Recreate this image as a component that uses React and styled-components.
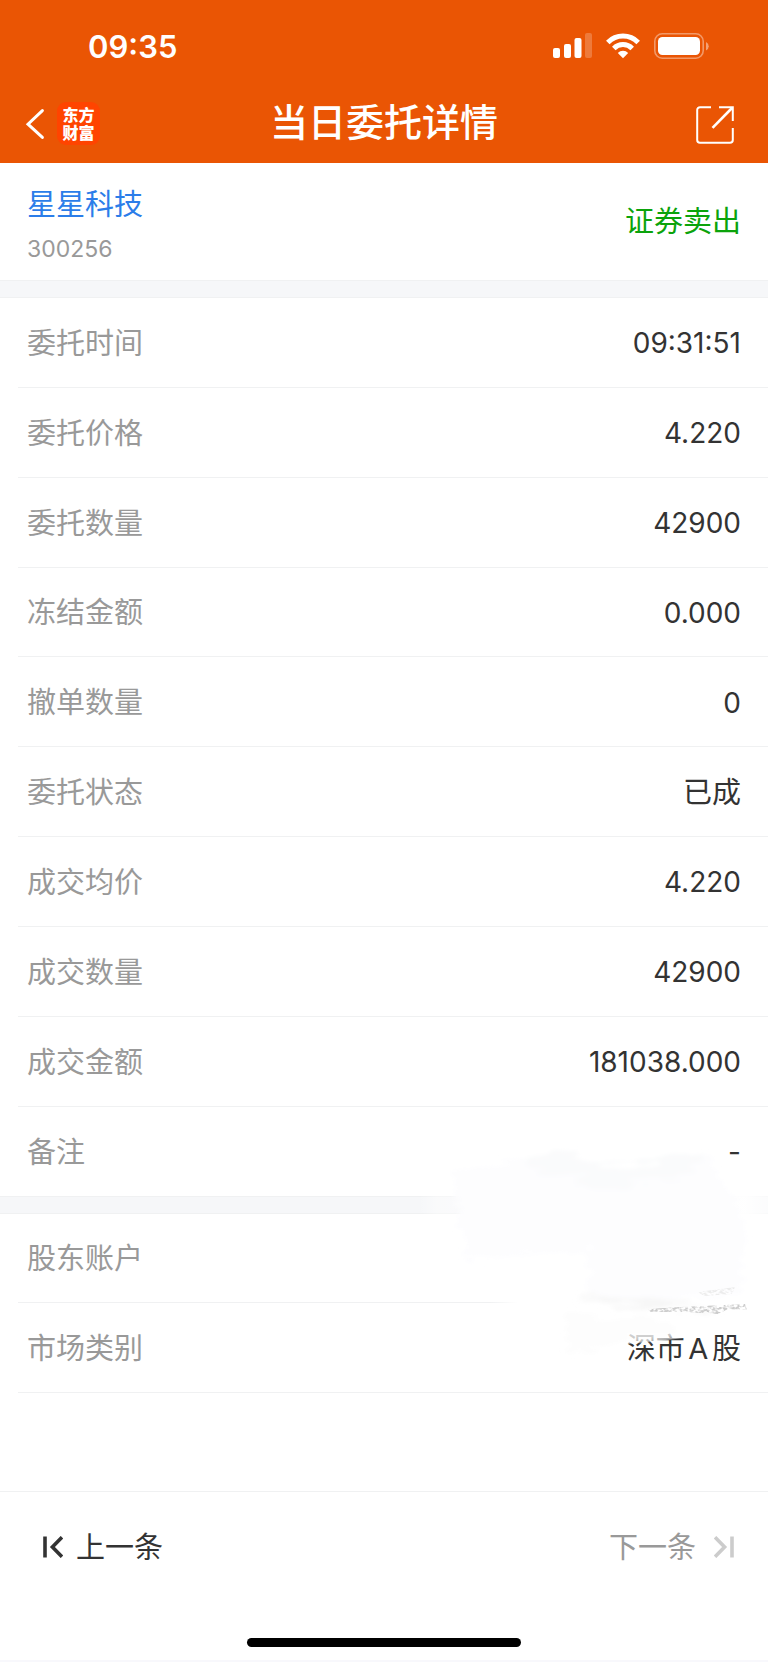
import styled, { createGlobalStyle, ThemeProvider } from 'styled-components';


const theme = {
    brand: '#ea5504',
    logo: '#ff4400',
    link: '#2b7de9',
    sell: '#0ba30b',
    text: '#333333',
    muted: '#999999',
    disabled: '#cccccc',
    line: '#f0f1f2',
    band: '#f6f7f9',
    fontSize: 29,
    gutter: 27,
};

const GlobalStyle = createGlobalStyle`
    * {
        box-sizing: border-box;
    }
    body {
        margin: 0;
        background: #ffffff;
        font-family: Inter, "Noto Sans CJK SC", sans-serif;
    }
    button {
        padding: 0;
        border: 0;
        background: none;
        color: inherit;
        font: inherit;
        cursor: pointer;
    }
    svg {
        display: block;
    }
`;

const StyledPage = styled.div`
    display: flex;
    flex-direction: column;

    min-height: 100vh;
    border-bottom: 2px solid #f8f8fc;

    color: ${({theme}) => theme.text};
    font-size: ${({theme}) => theme.fontSize}px;
`;
const StyledTop = styled.header`
    background: ${({theme}) => theme.brand};
    color: #ffffff;
`;
const StyledStatusBar = styled.div`
    display: flex;
    align-items: center;
    justify-content: space-between;

    height: 84px;
    padding: 8px 58px 0 88px;
`;
const StyledClock = styled.time`
    font-size: 31px;
    font-weight: 600;
`;
const StyledStatusIcons = styled.div`
    display: flex;
    align-items: center;
    gap: 14px;
`;
const StyledNavBar = styled.nav`
    display: grid;
    grid-template-columns: 1fr auto 1fr;
    align-items: center;

    height: 79px;
    padding: 0 24px;
`;
const StyledBack = styled.button`
    display: flex;
    align-items: center;
    justify-self: start;
    gap: 12px;
`;
const StyledLogo = styled.span`
    display: grid;
    place-content: center;

    width: 43px;
    height: 43px;
    border-radius: 9px;

    background: ${({theme}) => theme.logo};
    font-size: 16px;
    font-weight: 900;
    line-height: 18px;
`;
const StyledTitle = styled.h1`
    margin: 0;
    padding-bottom: 4px;

    font-size: 38px;
    font-weight: 500;
    line-height: 48px;
`;
const StyledShare = styled.button`
    justify-self: end;

    && {
        padding: 2px 10px 0;
    }
`;
const StyledSummary = styled.section`
    display: flex;
    align-items: center;
    justify-content: space-between;

    padding: 22px ${({theme}) => theme.gutter}px 15px;
`;
const StyledStock = styled.div`
    display: flex;
    flex-direction: column;
    gap: 8px;
`;
const StyledStockName = styled.a`
    color: ${({theme}) => theme.link};
    line-height: 40px;
    text-decoration: none;
`;
const StyledStockCode = styled.span`
    color: ${({theme}) => theme.muted};
    font-size: 23px;
    line-height: 32px;
`;
const StyledSide = styled.span`
    padding-bottom: 12px;

    color: ${({theme}) => theme.sell};
`;
const StyledBand = styled.div`
    height: 18px;
    border-top: 1px solid ${({theme}) => theme.line};
    border-bottom: 1px solid ${({theme}) => theme.line};

    background: ${({theme}) => theme.band};
`;
const StyledGroup = styled.dl`
    position: relative;
    display: flex;
    flex-direction: column;
    flex: ${({$rows}) => $rows} 0 auto;

    margin: 0;
`;
const StyledRow = styled.div`
    display: flex;
    align-items: center;
    justify-content: space-between;
    flex: 1 0 auto;

    min-height: 88px;
    margin-left: 18px;
    padding: 0 ${({theme}) => theme.gutter}px 0 9px;

    &:not(:last-child), ${StyledGroup}:last-of-type > & {
        border-bottom: 1px solid ${({theme}) => theme.line};
    }
`;
const StyledLabel = styled.dt`
    padding-bottom: 3px;

    color: ${({theme}) => theme.muted};
`;
const StyledValue = styled.dd`
    margin: 0;
    padding: ${({$numeric}) => $numeric ? '2px 0 0' : '0 0 3px'};

    font-size: ${({$numeric, theme}) => $numeric ? 28 : theme.fontSize}px;
    text-autospace: normal;
`;
const StyledSmudge = styled.svg`
    position: absolute;
    top: -104px;
    right: 0;

    pointer-events: none;
`;
const StyledPager = styled.footer`
    display: flex;
    align-items: center;
    justify-content: space-between;

    height: 111px;
    margin-top: 98px;
    padding: 0 34px 0 43px;
    border-top: 1px solid ${({theme}) => theme.line};
`;
const StyledPagerButton = styled.button`
    display: flex;
    align-items: center;
    gap: ${({$gap}) => $gap}px;

    &:disabled {
        color: ${({theme}) => theme.muted};
    }
    &:disabled svg {
        color: ${({theme}) => theme.disabled};
    }
`;
const StyledPagerText = styled.span`
    padding-bottom: 4px;
`;
const StyledHome = styled.div`
    width: 274px;
    height: 9px;
    margin: 36px auto 13px;
    border-radius: 5px;

    background: #000000;
`;


const orderRows = [
    ['委托时间', '09:31:51'],
    ['委托价格', '4.220'],
    ['委托数量', '42900'],
    ['冻结金额', '0.000'],
    ['撤单数量', '0'],
    ['委托状态', '已成'],
    ['成交均价', '4.220'],
    ['成交数量', '42900'],
    ['成交金额', '181038.000'],
    ['备注', '-'],
];
const accountRows = [
    ['股东账户', ''],
    ['市场类别', '深市A股'],
];

const SignalIcon = () => (
    <svg width="39" height="26" viewBox="0 0 39 26" fill="currentColor">
        <rect x="0" y="15" width="7" height="10" rx="2"/>
        <rect x="11" y="11" width="7" height="14" rx="2"/>
        <rect x="21.5" y="5" width="7" height="20" rx="2"/>
        <rect x="32" y="0" width="7" height="25" rx="2" opacity="0.22"/>
    </svg>
);

const WifiIcon = () => (
    <svg width="34" height="26" viewBox="0 0 34 26" fill="none" stroke="currentColor" strokeWidth="5">
        <path d="M1.8 9.4 A21.5 21.5 0 0 1 32.2 9.4"/>
        <path d="M7.8 15.4 A13 13 0 0 1 26.2 15.4"/>
        <path d="M17 25.3 L11.8 20 A7.4 7.4 0 0 1 22.2 20 Z" fill="currentColor" stroke="none"/>
    </svg>
);

const BatteryIcon = () => (
    <svg width="56" height="26" viewBox="0 0 56 26" fill="none">
        <rect x="0.8" y="0.8" width="48.4" height="24.4" rx="7.5" stroke="currentColor" strokeWidth="1.6" opacity="0.4"/>
        <rect x="4" y="4" width="42" height="18" rx="4.5" fill="currentColor"/>
        <path d="M52 9 a4.6 4.6 0 0 1 0 8.4 Z" fill="currentColor" opacity="0.45"/>
    </svg>
);

const BackIcon = () => (
    <svg width="21" height="32" viewBox="0 0 21 32" fill="none" stroke="currentColor" strokeWidth="3" strokeLinecap="round">
        <path d="M18.4 2.6 L4 16.2 L18.4 29.4" strokeLinejoin="miter"/>
    </svg>
);

const ShareIcon = () => (
    <svg width="38" height="38" viewBox="0 0 38 38" fill="none" stroke="currentColor" strokeWidth="2">
        <path d="M15 1.2 H4 A2.8 2.8 0 0 0 1.2 4 V34 A2.8 2.8 0 0 0 4 36.8 H34 A2.8 2.8 0 0 0 36.8 34 V22"/>
        <path d="M23 1.2 H36.8 V15"/>
        <path d="M36 2 L16.5 21.8" strokeWidth="2.6"/>
    </svg>
);

const StepIcon = ({flip}) => (
    <svg width="20" height="22" viewBox="0 0 20 22" fill="none" stroke="currentColor">
        <g transform={flip ? 'translate(20 0) scale(-1 1)' : undefined}>
            <path d="M2 0.5 V21.5" strokeWidth="3.6"/>
            <path d="M19 1.2 L9.4 11 L19 20.8" strokeWidth="3.6"/>
        </g>
    </svg>
);

// Brush marks hiding the account number
const Smudge = () => (
    <StyledSmudge width="368" height="300" viewBox="0 0 368 300" aria-hidden="true">
        <defs>
            <filter id="soft" x="-10%" y="-20%" width="120%" height="140%">
                <feTurbulence type="fractalNoise" baseFrequency="0.02 0.15" numOctaves="3" seed="7" result="noise"/>
                <feDisplacementMap in="SourceGraphic" in2="noise" scale="24" xChannelSelector="R" yChannelSelector="G" result="rough"/>
                <feGaussianBlur in="rough" stdDeviation="2"/>
            </filter>
            <filter id="grain" x="0" y="-20%" width="100%" height="140%">
                <feTurbulence type="fractalNoise" baseFrequency="0.25 0.4" numOctaves="2" seed="4" result="noise"/>
                <feColorMatrix in="noise" type="matrix" values="0 0 0 0 0  0 0 0 0 0  0 0 0 0 0  0 0 0 4 -1.6" result="spots"/>
                <feComposite in="SourceGraphic" in2="spots" operator="in" result="dots"/>
                <feGaussianBlur in="dots" stdDeviation="0.7"/>
            </filter>
            <linearGradient id="wipe" x1="0" x2="1">
                <stop offset="0.05" stopColor="#ffffff" stopOpacity="0"/>
                <stop offset="0.1" stopColor="#ffffff" stopOpacity="0.4"/>
                <stop offset="0.25" stopColor="#ffffff" stopOpacity="0.5"/>
                <stop offset="0.36" stopColor="#ffffff" stopOpacity="0.95"/>
                <stop offset="0.94" stopColor="#ffffff" stopOpacity="0.95"/>
                <stop offset="1" stopColor="#ffffff" stopOpacity="0.6"/>
            </linearGradient>
            <linearGradient id="rub" x1="0" x2="1">
                <stop offset="0" stopColor="#ffffff" stopOpacity="0"/>
                <stop offset="0.1" stopColor="#ffffff"/>
                <stop offset="1" stopColor="#ffffff"/>
            </linearGradient>
        </defs>
        <rect x="0" y="82" width="368" height="24" fill="url(#wipe)"/>
        <rect x="90" y="186" width="278" height="12" fill="url(#rub)"/>
        <g filter="url(#soft)">
            <path d="M52 62 L130 48 L225 56 L310 44 L322 72 L345 112 L342 180 L240 196 L190 186 L190 140 L130 146 L66 150 Z" fill="#fdfdfe"/>
            <path d="M120 50 L152 44 L225 56 L304 44 L290 64 L200 78 L140 60 Z" fill="#fafbfc"/>
            <path d="M166 208 H276 V224 L230 236 L166 242 Z" fill="#fcfcfc" opacity="0.5"/>
            <path d="M178 186 L238 198 L320 198 L250 188 Z" fill="#f7f7f7"/>
        </g>
        <path d="M227 223 H285 V228 L256 231 L227 234 Z" fill="#ffffff" opacity="0.55"/>
        <g filter="url(#grain)">
            <path d="M248 199 L280 197 L325 195 L345 194 L347 200 L328 199 L318 204 L285 202 L250 202 Z" fill="#cccccc"/>
            <path d="M298 182 L335 177 L332 184 L304 186 Z" fill="#ececec"/>
        </g>
    </StyledSmudge>
);

const Group = ({rows, children}) => (
    <StyledGroup $rows={rows.length}>
        {rows.map(([label, value]) => (
            <StyledRow key={label}>
                <StyledLabel>{label}</StyledLabel>
                <StyledValue $numeric={/^[\d.:-]*$/.test(value)}>{value}</StyledValue>
            </StyledRow>
        ))}
        {children}
    </StyledGroup>
);

const App = () => (
    <ThemeProvider theme={theme}>
        <GlobalStyle/>
        <StyledPage lang="zh-CN">
            <StyledTop>
                <StyledStatusBar>
                    <StyledClock>09:35</StyledClock>
                    <StyledStatusIcons>
                        <SignalIcon/>
                        <WifiIcon/>
                        <BatteryIcon/>
                    </StyledStatusIcons>
                </StyledStatusBar>
                <StyledNavBar>
                    <StyledBack type="button">
                        <BackIcon/>
                        <StyledLogo>
                            <span>东方</span>
                            <span>财富</span>
                        </StyledLogo>
                    </StyledBack>
                    <StyledTitle>当日委托详情</StyledTitle>
                    <StyledShare type="button" aria-label="分享">
                        <ShareIcon/>
                    </StyledShare>
                </StyledNavBar>
            </StyledTop>
            <StyledSummary>
                <StyledStock>
                    <StyledStockName href="#300256">星星科技</StyledStockName>
                    <StyledStockCode>300256</StyledStockCode>
                </StyledStock>
                <StyledSide>证券卖出</StyledSide>
            </StyledSummary>
            <StyledBand/>
            <Group rows={orderRows}/>
            <StyledBand/>
            <Group rows={accountRows}>
                <Smudge/>
            </Group>
            <StyledPager>
                <StyledPagerButton type="button" $gap={13}>
                    <StepIcon/>
                    <StyledPagerText>上一条</StyledPagerText>
                </StyledPagerButton>
                <StyledPagerButton type="button" $gap={18} disabled>
                    <StyledPagerText>下一条</StyledPagerText>
                    <StepIcon flip/>
                </StyledPagerButton>
            </StyledPager>
            <StyledHome/>
        </StyledPage>
    </ThemeProvider>
);

export default App;
